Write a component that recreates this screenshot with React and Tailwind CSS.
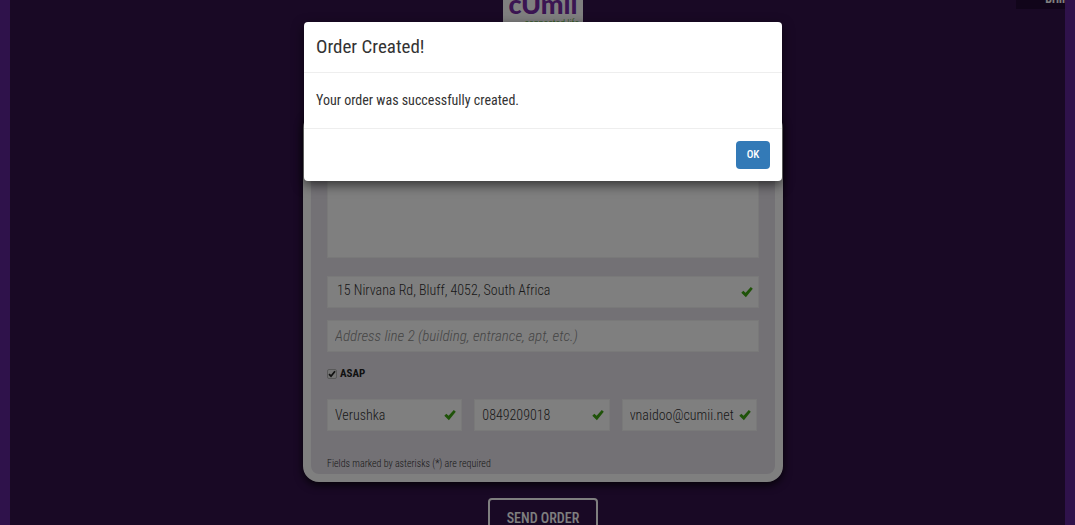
import React from "react";

function Check() {
  return (
    <svg viewBox="0 0 12 12" className="pointer-events-none absolute top-1/2 right-1.5 size-3 -translate-y-1/2 fill-[#3fa612]" aria-hidden="true">
      <path d="M0.3 6.8 2.3 4.7 4.6 6.8 9.8 1 11.8 2.8 4.9 11.2Z" />
    </svg>
  );
}

function Field({ id, label, valid, className = "", ...props }) {
  return (
    <div className="relative">
      <label htmlFor={id} className="sr-only">{label}</label>
      <input
        id={id}
        className={`block h-8 w-full min-w-0 border border-[#f2f2f2] bg-white text-sm font-light text-[#333333] placeholder:text-[15px] placeholder:text-[#8c8c8c] placeholder:italic ${className}`}
        {...props}
      />
      {valid && <Check />}
    </div>
  );
}

export default function App() {
  return (
    <div className="h-screen overflow-hidden bg-[#2f124b] px-2.5 font-['Roboto_Condensed','Roboto',sans-serif]">
      <div className="relative h-full overflow-hidden bg-[#32124a] pl-[11px]">
        <main className="mx-auto flex w-[480px] max-w-full flex-col items-center">
          <div className="flex h-9 w-20 flex-col items-center justify-end bg-white pb-1 text-[#762ba4]">
            <span className="font-['Lato',sans-serif] text-[27px] leading-5 font-black">cUmii</span>
            <span className="mt-0.5 mr-1 self-end text-[10px] leading-4 font-light text-[#3fa612]">connected life</span>
          </div>
          <form className="mt-[76px] w-full rounded-2xl border-8 border-white bg-[#e6e2eb] px-4 pb-0.5 shadow-[0_3px_8px_rgba(0,0,0,0.8)]">
            <label htmlFor="notes" className="sr-only">Order</label>
            <textarea id="notes" className="mt-4 block h-[122px] w-full resize-none border border-[#f2f2f2] bg-white" />
            <div className="mt-[18px]">
              <Field id="address" label="Address" valid className="pr-6 pb-1 pl-[9px]" defaultValue="15 Nirvana Rd, Bluff, 4052, South Africa" />
            </div>
            <div className="mt-3">
              <Field id="address2" label="Address line 2" className="px-[7px]" placeholder="Address line 2 (building, entrance, apt, etc.)" />
            </div>
            <div className="mt-3 flex h-5 items-center">
              <label htmlFor="asap" className="relative flex items-center gap-[3px] text-[11px] font-bold text-[#222222]">
                <input id="asap" type="checkbox" defaultChecked className="size-2.5 appearance-none rounded-xs border border-[#b0b0b0] bg-[#e6e6e6]" />
                <svg viewBox="0 0 10 10" className="pointer-events-none absolute left-0 size-2.5" aria-hidden="true">
                  <path d="M2 5.2 4 7.2 8 2.3" fill="none" stroke="#222222" strokeWidth="1.8" />
                </svg>
                ASAP
              </label>
            </div>
            <div className="mt-[15px] mr-0.5 grid grid-cols-3 gap-3">
              <Field id="name" label="Name" valid className="pr-5 pl-[7px]" defaultValue="Verushka" />
              <Field id="phone" label="Phone" valid className="pr-5 pl-[7px]" defaultValue="0849209018" />
              <Field id="email" label="Email" valid className="pr-4 pl-[7px]" defaultValue="vnaidoo@cumii.net" />
            </div>
            <p className="mt-[25px] text-[10px] leading-4 font-light text-[#333333]">Fields marked by asterisks (*) are required</p>
          </form>
          <button type="button" className="mt-4 h-10 w-[110px] shrink-0 rounded border-2 border-white text-sm font-medium text-white">SEND ORDER</button>
        </main>
        <div className="absolute top-0 right-0 h-[9px] w-[49px] overflow-hidden bg-[#220a34]">
          <span className="absolute right-[-6px] bottom-1 text-xs leading-3 font-bold text-white">Bring</span>
        </div>
        <div className="absolute inset-0 bg-black/50 pt-[22px] pl-[11px]">
          <section role="dialog" aria-modal="true" aria-labelledby="dialog-title" className="mx-auto w-[478px] max-w-full rounded bg-white text-[#333333] shadow-[0_4px_12px_rgba(0,0,0,0.6)]">
            <header className="border-b border-[#eeeeee] px-3 py-3">
              <h1 id="dialog-title" className="text-[19px] leading-[26px]">Order Created!</h1>
            </header>
            <p className="px-3 py-4 text-sm leading-[23px]">Your order was successfully created.</p>
            <footer className="flex justify-end border-t border-[#eeeeee] p-3">
              <button type="button" className="h-7 w-[34px] rounded bg-[#337ab7] text-[11px] font-medium text-white">OK</button>
            </footer>
          </section>
        </div>
      </div>
    </div>
  );
}
